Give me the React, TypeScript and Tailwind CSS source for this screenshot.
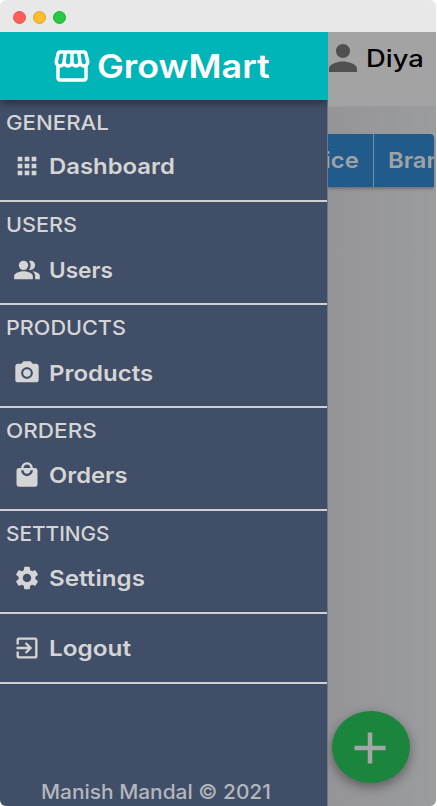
import type { ReactNode } from 'react';
import type { IconType } from 'react-icons';
import {
  MdApps,
  MdPeopleAlt,
  MdCameraAlt,
  MdLocalMall,
  MdSettings,
  MdExitToApp,
  MdStorefront,
  MdPerson,
} from 'react-icons/md';

type Entry = {
  title?: string;
  titleStretch?: string;
  label: string;
  labelStretch: string;
  icon: IconType;
  size: string;
  gap: string;
};

const entries: Entry[] = [
  { title: 'GENERAL', titleStretch: 'scale-x-[1.11]', label: 'Dashboard', labelStretch: 'scale-x-[1.085]', icon: MdApps, size: 'h-[102px] pt-2', gap: 'mt-[13px]' },
  { title: 'USERS', titleStretch: 'scale-x-[1.08]', label: 'Users', labelStretch: 'scale-x-[1.03]', icon: MdPeopleAlt, size: 'h-[103px] pt-2', gap: 'mt-[15px]' },
  { title: 'PRODUCTS', titleStretch: 'scale-x-[1.08]', label: 'Products', labelStretch: 'scale-x-[1.09]', icon: MdCameraAlt, size: 'h-[103px] pt-2', gap: 'mt-[15px]' },
  { title: 'ORDERS', titleStretch: 'scale-x-[1.125]', label: 'Orders', labelStretch: 'scale-x-[1.08]', icon: MdLocalMall, size: 'h-[103px] pt-2', gap: 'mt-3.5' },
  { title: 'SETTINGS', titleStretch: 'scale-x-[1.04]', label: 'Settings', labelStretch: 'scale-x-[1.1]', icon: MdSettings, size: 'h-[103px] pt-2', gap: 'mt-3.5' },
  { label: 'Logout', labelStretch: 'scale-x-[1.105]', icon: MdExitToApp, size: 'h-[70px] pt-[19px]', gap: '' },
];

function Wide({ className, children }: { className: string; children: ReactNode }) {
  return <span className={`inline-block origin-left whitespace-nowrap ${className}`}>{children}</span>;
}

function Section({ title, titleStretch = '', label, labelStretch, icon: Icon, size, gap }: Entry) {
  return (
    <section className={`border-b-2 border-[#cfd0d3] ${size}`}>
      {title && (
        <h2 className="h-[30px] pl-1.5 text-[20px] leading-[30px] font-medium">
          <Wide className={titleStretch}>{title}</Wide>
        </h2>
      )}
      <a className={`flex h-[30px] items-center pl-[13px] ${gap}`}>
        <Icon className="size-7 shrink-0" />
        <span className="ml-[7.5px] text-[22px] leading-[30px] font-semibold">
          <Wide className={labelStretch}>{label}</Wide>
        </span>
      </a>
    </section>
  );
}

export default function App() {
  return (
    <div className="h-[806px] w-[437px] overflow-hidden bg-white font-['Inter',sans-serif]">
      <div className="flex h-full w-[436px] flex-col overflow-hidden rounded-[6px] bg-[#e8e8e8]">
        <div className="flex h-8 shrink-0 items-center gap-[7px] pt-0.5 pl-[13px]">
          <span className="size-[13px] rounded-full border border-[#e2544e] bg-[#ff5f57]" />
          <span className="size-[13px] rounded-full border border-[#dfa033] bg-[#ffbd2e]" />
          <span className="size-[13px] rounded-full border border-[#1eac36] bg-[#28ca41]" />
        </div>

        <div className="flex min-h-0 flex-1">
          <aside className="flex w-[328px] shrink-0 flex-col border-r border-[#6b7587] bg-[#404e67] text-[#d5d5d6]">
            <header className="relative mr-[-1px] flex h-[68px] shrink-0 items-center bg-[#00b5b8] pl-[50.5px] text-white shadow-[0_3px_8px_rgba(0,0,0,0.4)] [clip-path:inset(0_0_-14px_0)]">
              <MdStorefront className="size-[42px] shrink-0" />
              <h1 className="ml-[4.5px] text-[33px] leading-[42px] font-semibold">
                <Wide className="scale-x-[1.085]">GrowMart</Wide>
              </h1>
            </header>
            <nav>
              {entries.map((entry) => (
                <Section key={entry.label} {...entry} />
              ))}
            </nav>
            <footer className="mt-auto h-7 pl-[41px] text-[20px] leading-7 font-medium text-[#b3b7be]">
              <Wide className="scale-x-[1.045]">Manish Mandal © 2021</Wide>
            </footer>
          </aside>

          <main className="flex min-w-0 flex-1 flex-col overflow-hidden bg-linear-to-r from-[#959597] to-[#9b9c9e]">
            <div className="flex h-[75px] shrink-0 items-start border-b border-[#9b9b9e] bg-[#a3a3a3] pt-[5px]">
              <MdPerson className="-ml-1.5 size-[42px] shrink-0 text-[#505050]" />
              <span className="ml-0.5 text-[24px] leading-[43px] font-medium text-black">
                <Wide className="scale-x-[1.14]">Diya</Wide>
              </span>
            </div>

            <div className="mt-[27px] mr-0.5 flex h-[53px] shrink-0 overflow-hidden rounded-tr bg-[#215b8b] text-[22px] leading-[53px] font-semibold text-[#a1a2a4] shadow-[0_2px_3px_rgba(0,0,0,0.25)]">
              <div className="flex w-[46px] shrink-0 justify-end border-r border-[#7890a4] pr-3.5">
                <span className="inline-block origin-right scale-x-[1.08]">Price</span>
              </div>
              <div className="pl-3.5">
                <Wide className="scale-x-[1.08]">Brand</Wide>
              </div>
            </div>

            <button className="mt-auto mb-[23px] ml-1 flex h-[72px] w-[78px] shrink-0 items-center justify-center rounded-[50%] bg-[#1b843d] text-[#a3a5a6] shadow-[0_4px_12px_rgba(0,0,0,0.4)]">
              <svg viewBox="0 0 32 32" className="mt-0.5 ml-[-2px] size-8" fill="none" stroke="currentColor" strokeWidth="4.5">
                <path d="M16 0.5V31.5M0.5 16H31.5" />
              </svg>
            </button>
          </main>
        </div>
      </div>
    </div>
  );
}
